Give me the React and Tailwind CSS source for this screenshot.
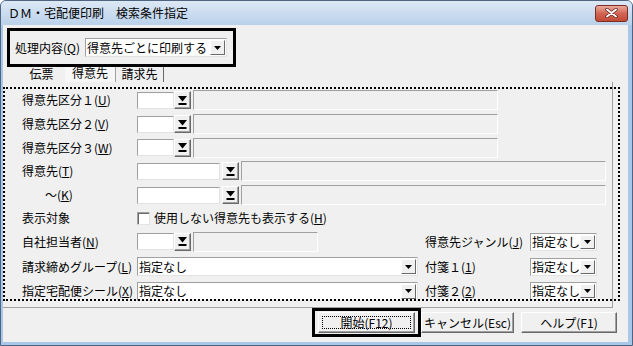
import React from 'react';

function PickButton({ className = '' }) {
  return (
    <div className={`w-[17px] h-[18px] bg-[#f0f0f0] border border-t-white border-l-white border-b-[#696969] border-r-[#696969] shadow-[inset_-1px_-1px_0_#a0a0a0] flex items-center justify-center ${className}`}>
      <svg width="11" height="11" viewBox="0 0 11 11">
        <path d="M1 1h9L5.5 6.5z" fill="#000" />
        <rect x="1.5" y="8" width="8" height="2" fill="#000" />
      </svg>
    </div>
  );
}

function Field({ className = '' }) {
  return (
    <div className={`h-[17px] bg-white border border-t-[#a0a0a0] border-l-[#a0a0a0] border-b-[#e3e3e3] border-r-[#e3e3e3] ${className}`} />
  );
}

function Display({ className = '' }) {
  return (
    <div className={`h-[20px] bg-[#f0f0f0] border border-t-[#a0a0a0] border-l-[#a0a0a0] border-b-white border-r-white ${className}`} />
  );
}

function Combo({ value, className = '' }) {
  return (
    <div className={`bg-white border border-t-[#a0a0a0] border-l-[#a0a0a0] border-b-[#e3e3e3] border-r-[#e3e3e3] flex items-center ${className}`}>
      <span className="flex-1 min-w-0 pl-[1px] whitespace-nowrap leading-[14px]">{value}</span>
      <div className="w-[15px] shrink-0 h-[calc(100%-2px)] mr-[1px] bg-[#f0f0f0] border border-t-white border-l-white border-b-[#696969] border-r-[#696969] flex items-center justify-center">
        <svg width="7" height="4" viewBox="0 0 7 4">
          <path d="M0 0h7L3.5 4z" fill="#000" />
        </svg>
      </div>
    </div>
  );
}

function Label({ children, className = '' }) {
  return <div className={`w-[115px] shrink-0 whitespace-nowrap leading-[14px] ${className}`}>{children}</div>;
}

function Btn({ children, className = '' }) {
  return (
    <div className={`h-[21px] bg-[#f0f0f0] border border-t-white border-l-white border-b-[#696969] border-r-[#696969] shadow-[inset_-1px_-1px_0_#a0a0a0] flex items-center justify-center leading-[14px] ${className}`}>
      {children}
    </div>
  );
}

export default function App() {
  return (
    <div className="w-[633px] h-[346px] flex flex-col bg-[#a9c8e9] border border-[#4e6480] rounded-t-[6px] overflow-hidden font-['Noto_Sans_CJK_JP','Noto_Sans',sans-serif] text-[12px] leading-[14px] text-black">
      {/* title bar */}
      <div className="h-[24px] shrink-0 flex items-center bg-gradient-to-b from-[#dde8f5] to-[#b9d1ea] pl-[7px] pr-[4px]">
        <span>ＤＭ・宅配便印刷　検索条件指定</span>
        <div className="ml-auto w-[33px] h-[17px] rounded-[3px] border border-[#7a2e26] bg-gradient-to-b from-[#e9a99c] via-[#d26552] to-[#c24a36] flex items-center justify-center">
          <svg width="13" height="10" viewBox="0 0 13 10">
            <path d="M2 1.5l9 7M11 1.5l-9 7" stroke="#5a1d16" strokeWidth="3.4" strokeLinecap="round" />
            <path d="M2 1.5l9 7M11 1.5l-9 7" stroke="#fff" strokeWidth="2" strokeLinecap="round" />
          </svg>
        </div>
      </div>

      {/* client */}
      <div className="flex-1 ml-[2px] mr-[4px] mb-[3px] bg-[#f0f0f0] flex flex-col relative">
        {/* processing mode */}
        <div className="relative z-10 mt-[3px] ml-[4px] w-[229px] h-[39px] shrink-0 border-[3px] border-black bg-[#f0f0f0] flex items-center pl-[5px]">
          <div className="w-[70px] whitespace-nowrap">処理内容(<u>Q</u>)</div>
          <Combo value="得意先ごとに印刷する" className="w-[142px] h-[19px]" />
        </div>

        {/* tabs */}
        <div className="h-[18px] -mt-[3px] shrink-0 flex items-end pl-[15px]">
          <div className="w-[47px] h-[16px] flex items-center justify-center">伝票</div>
          <div className="w-[51px] h-[18px] flex items-start pt-[2px] justify-center bg-[#f7f7f7] border-r border-[#a0a0a0]">得意先</div>
          <div className="w-[48px] h-[16px] flex items-center justify-center border-r border-[#696969]">請求先</div>
        </div>

        {/* panel */}
        <div className="w-[610px] h-[226px] shrink-0 border-r border-b border-[#a0a0a0] pt-[6px] pl-[19px] flex flex-col">
          <div className="h-[24px] flex items-center">
            <Label>得意先区分１(<u>U</u>)</Label>
            <Field className="w-[37px]" />
            <PickButton />
            <Display className="w-[305px] ml-[2px]" />
          </div>
          <div className="h-[24px] flex items-center">
            <Label>得意先区分２(<u>V</u>)</Label>
            <Field className="w-[37px]" />
            <PickButton />
            <Display className="w-[305px] ml-[2px]" />
          </div>
          <div className="h-[23px] flex items-center">
            <Label>得意先区分３(<u>W</u>)</Label>
            <Field className="w-[37px]" />
            <PickButton />
            <Display className="w-[305px] ml-[2px]" />
          </div>
          <div className="h-[24px] flex items-center">
            <Label>得意先(<u>T</u>)</Label>
            <Field className="w-[83px]" />
            <PickButton className="ml-[2px]" />
            <Display className="w-[365px] ml-[2px]" />
          </div>
          <div className="h-[24px] flex items-center">
            <Label className="pl-[23px]">～(<u>K</u>)</Label>
            <Field className="w-[83px]" />
            <PickButton className="ml-[2px]" />
            <Display className="w-[365px] ml-[2px]" />
          </div>
          <div className="h-[22px] flex items-center">
            <Label>表示対象</Label>
            <div className="w-[13px] h-[13px] bg-white border border-t-[#a0a0a0] border-l-[#a0a0a0] border-b-[#e3e3e3] border-r-[#e3e3e3] shadow-[inset_1px_1px_0_#696969]" />
            <span className="ml-[4px]">使用しない得意先も表示する(<u>H</u>)</span>
          </div>
          <div className="h-[25px] flex items-center">
            <div className="w-[403px] flex items-center">
              <Label>自社担当者(<u>N</u>)</Label>
              <Field className="w-[37px]" />
              <PickButton />
              <Display className="w-[125px] ml-[2px]" />
            </div>
            <div className="w-[105px] whitespace-nowrap">得意先ジャンル(<u>J</u>)</div>
            <Combo value="指定なし" className="w-[67px] h-[18px]" />
          </div>
          <div className="h-[25px] flex items-center">
            <div className="w-[403px] flex items-center">
              <Label>請求締めグループ(<u>L</u>)</Label>
              <Combo value="指定なし" className="w-[281px] h-[19px]" />
            </div>
            <div className="w-[105px] whitespace-nowrap">付箋１(<u>1</u>)</div>
            <Combo value="指定なし" className="w-[67px] h-[18px]" />
          </div>
          <div className="h-[24px] flex items-center">
            <div className="w-[403px] flex items-center">
              <Label>指定宅配便シール(<u>X</u>)</Label>
              <Combo value="指定なし" className="w-[281px] h-[19px]" />
            </div>
            <div className="w-[105px] whitespace-nowrap">付箋２(<u>2</u>)</div>
            <Combo value="指定なし" className="w-[67px] h-[18px]" />
          </div>
        </div>

        {/* focus rectangle over the panel */}
        <div className="absolute left-0 top-[62px] w-[617px] h-[214px] border-2 border-dotted border-black pointer-events-none" />

        {/* buttons */}
        <div className="h-[29px] shrink-0 flex items-center justify-end pr-[11px]">
          <div className="w-[109px] h-[29px] border-[3px] border-black flex items-center justify-center">
            <Btn className="w-[97px] p-[3px]">
              <div className="w-full h-full border border-dotted border-black flex items-center justify-center">開始(F12)</div>
            </Btn>
          </div>
          <Btn className="w-[93px]">キャンセル(Esc)</Btn>
          <Btn className="w-[96px] ml-[7px]">ヘルプ(F1)</Btn>
        </div>
      </div>
    </div>
  );
}
